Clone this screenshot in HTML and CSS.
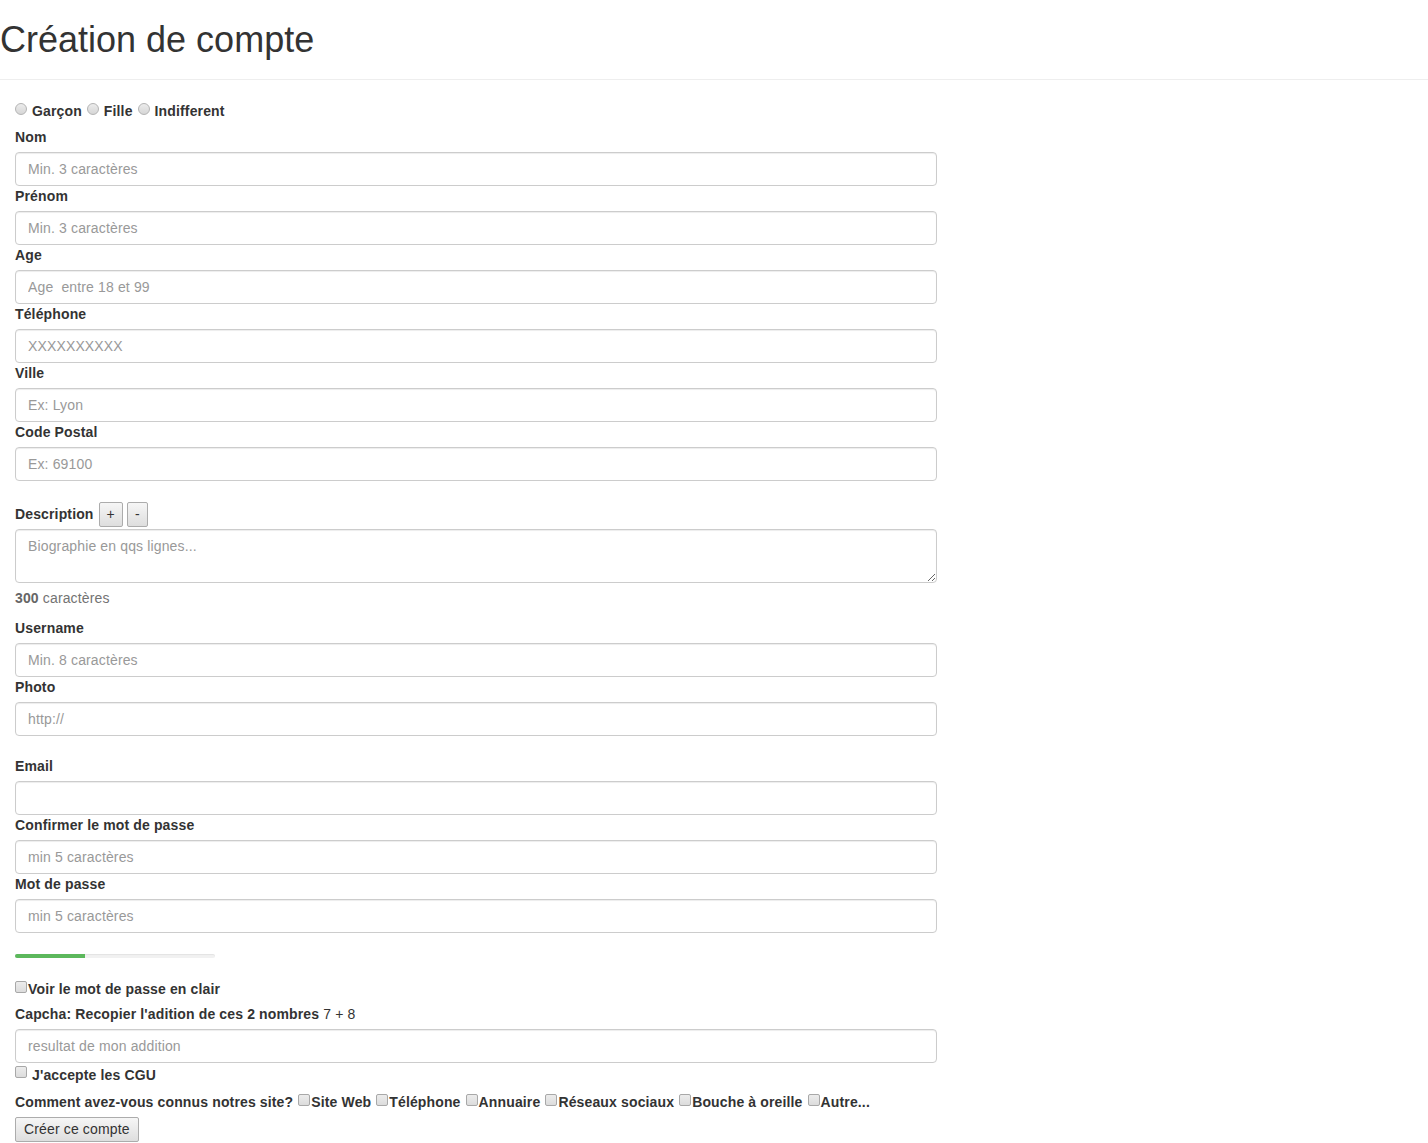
FILE: index.html
```html
<!DOCTYPE html>
<html lang="fr">
<head>
<meta charset="utf-8">
<title>Création de compte</title>
<link rel="stylesheet" href="styles.css">
</head>
<body>
<div class="page-header">
  <h1>Création de compte</h1>
</div>
<form class="form">
  <div class="radios">
    <input type="radio" class="radio" name="sexe"><span>Garçon</span>
    <input type="radio" class="radio" name="sexe"><span>Fille</span>
    <input type="radio" class="radio" name="sexe"><span>Indifferent</span>
  </div>

  <label class="lbl">Nom</label>
  <input class="input" type="text" placeholder="Min. 3 caractères">
  <label class="lbl">Prénom</label>
  <input class="input" type="text" placeholder="Min. 3 caractères">
  <label class="lbl">Age</label>
  <input class="input" type="text" placeholder="Age  entre 18 et 99">
  <label class="lbl">Téléphone</label>
  <input class="input" type="text" placeholder="XXXXXXXXXX">
  <label class="lbl">Ville</label>
  <input class="input" type="text" placeholder="Ex: Lyon">
  <label class="lbl">Code Postal</label>
  <input class="input" type="text" placeholder="Ex: 69100">

  <div class="desc-row">
    <span class="lbl-inline">Description</span>
    <button type="button" class="btn">+</button>
    <button type="button" class="btn">-</button>
  </div>
  <textarea class="input textarea" rows="2" placeholder="Biographie en qqs lignes..."></textarea>
  <p class="help"><b>300</b> caractères</p>

  <label class="lbl">Username</label>
  <input class="input" type="text" placeholder="Min. 8 caractères">
  <label class="lbl">Photo</label>
  <input class="input" type="text" placeholder="http://">

  <label class="lbl lbl-spaced">Email</label>
  <input class="input" type="text">
  <label class="lbl">Confirmer le mot de passe</label>
  <input class="input" type="text" placeholder="min 5 caractères">
  <label class="lbl">Mot de passe</label>
  <input class="input" type="text" placeholder="min 5 caractères">

  <div class="progress"><div class="progress-bar" style="width:35%"></div></div>

  <label class="lbl"><input type="checkbox" class="check check-tight">Voir le mot de passe en clair</label>
  <label class="lbl">Capcha: Recopier l'adition de ces 2 nombres <span class="normal">7 + 8</span></label>
  <input class="input" type="text" placeholder="resultat de mon addition">

  <label class="lbl lbl-cgu"><input type="checkbox" class="check check-cgu">J'accepte les CGU</label>

  <div class="lbl lbl-how">Comment avez-vous connus notres site? <input type="checkbox" class="check">Site Web <input type="checkbox" class="check">Téléphone <input type="checkbox" class="check">Annuaire <input type="checkbox" class="check">Réseaux sociaux <input type="checkbox" class="check">Bouche à oreille <input type="checkbox" class="check">Autre...</div>

  <button type="button" class="btn btn-submit">Créer ce compte</button>
</form>
</body>
</html>
```
FILE: styles.css
```css
html, body {
  margin: 0;
  padding: 0;
  background: #fff;
}
body {
  font-family: "Liberation Sans", Arial, sans-serif;
  font-size: 14px;
  line-height: 20px;
  letter-spacing: 0.14px;
  color: #333;
}
.page-header {
  padding: 20px 0 9px;
  border-bottom: 1px solid #eee;
  margin-bottom: 21px;
}
.page-header h1 {
  margin: 0 0 10px;
  font-size: 36px;
  font-weight: 500;
  line-height: 1.1;
  letter-spacing: 0;
  color: #333;
}
.form {
  width: 922px;
  padding: 0 15px;
  margin: 0;
}
.radios {
  display: flex;
  align-items: center;
  gap: 5px;
  height: 20px;
  margin-top: 0;
  margin-bottom: 6px;
  font-weight: bold;
}
.radio {
  appearance: none;
  -webkit-appearance: none;
  width: 12px;
  height: 12px;
  margin: 0 0 3px 0;
  border: 1px solid #b4b4b4;
  border-radius: 50%;
  background: linear-gradient(#ececec, #d6d6d6);
  box-sizing: border-box;
}
.lbl {
  display: block;
  font-weight: bold;
  margin-bottom: 5px;
}
.lbl-spaced {
  margin-top: 20px;
}
.normal {
  font-weight: normal;
}
.input {
  display: block;
  width: 100%;
  height: 34px;
  padding: 6px 12px;
  margin: 0;
  border: 1px solid #ccc;
  border-radius: 4px;
  box-sizing: border-box;
  font-family: inherit;
  font-size: 14px;
  line-height: 20px;
  letter-spacing: 0.14px;
  color: #555;
  background: #fff;
  box-shadow: inset 0 1px 1px rgba(0, 0, 0, .075);
}
.input::placeholder {
  color: #999;
}
.textarea {
  height: 54px;
  resize: vertical;
}
.desc-row {
  display: flex;
  align-items: center;
  height: 25px;
  margin-top: 21px;
  margin-bottom: 2px;
}
.lbl-inline {
  font-weight: bold;
  margin-right: 5px;
}
.btn {
  height: 25px;
  padding: 0 7px;
  margin: 0 4px 0 0;
  border: 1px solid #acacac;
  border-radius: 2px;
  background: linear-gradient(#f6f6f6, #dedede);
  font-family: inherit;
  font-size: 14px;
  line-height: 20px;
  letter-spacing: 0.14px;
  color: #333;
  box-sizing: border-box;
}
.help {
  margin: 5px 0 10px;
  color: #737373;
}
.help b {
  color: #666;
}
.progress {
  width: 200px;
  height: 4px;
  margin: 21px 0 21px;
  border-radius: 4px;
  background: #f1f1f1;
  box-shadow: inset 0 1px 1px rgba(0, 0, 0, .06);
  overflow: hidden;
}
.progress-bar {
  height: 100%;
  background: #5cb85c;
}
.check {
  appearance: none;
  -webkit-appearance: none;
  display: inline-block;
  width: 12px;
  height: 12px;
  margin: 0 1px 1px 1px;
  vertical-align: baseline;
  border: 1px solid #a8a8a8;
  border-radius: 2px;
  background: linear-gradient(#ececec, #dcdcdc);
  box-sizing: border-box;
}
.check-tight {
  margin-left: 0;
}
.lbl-cgu {
  margin-top: 2px;
  margin-bottom: 7px;
}
.check-cgu {
  margin: 0 5px 2px 0;
}
.lbl-how {
  margin-bottom: 5px;
}
.btn-submit {
  padding: 0 8px;
  margin: 0;
}
```
